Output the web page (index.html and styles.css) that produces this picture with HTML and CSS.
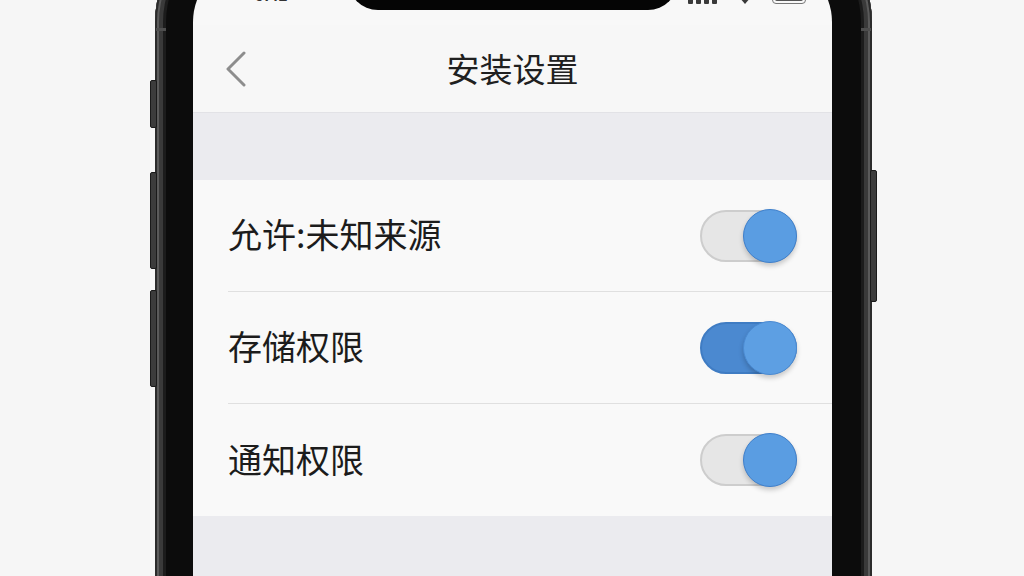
FILE: index.html
```html
<!DOCTYPE html>
<html lang="zh-CN">
<head>
    <meta charset="UTF-8">
    <meta name="viewport" content="width=device-width, initial-scale=1.0">
    <title>安装设置</title>
    <link rel="stylesheet" href="styles.css">
</head>
<body>

    <!-- 手机外框 -->
    <div class="phone">
        <span class="side-btn btn-mute"></span>
        <span class="side-btn btn-vol-up"></span>
        <span class="side-btn btn-vol-down"></span>
        <span class="side-btn btn-power"></span>
        <span class="band band-left"></span>
        <span class="band band-right"></span>

        <div class="screen">
            <div class="notch"></div>

            <!-- 状态栏 -->
            <div class="status-bar">
                <span class="time">9:41</span>
                <div class="status-icons">
                    <svg class="signal" width="30" height="14" viewBox="0 0 30 14">
                        <rect x="0" y="9" width="5" height="5" rx="1"/>
                        <rect x="8" y="6" width="5" height="8" rx="1"/>
                        <rect x="16" y="3" width="5" height="11" rx="1"/>
                        <rect x="24" y="0" width="5" height="14" rx="1"/>
                    </svg>
                    <svg class="wifi" width="14" height="10" viewBox="0 0 14 10">
                        <path d="M7 10 L1 3 A9 9 0 0 1 13 3 Z"/>
                    </svg>
                    <div class="battery"><span></span></div>
                </div>
            </div>

            <!-- 导航栏 -->
            <div class="nav-bar">
                <svg class="back" width="22" height="36" viewBox="0 0 22 36">
                    <path d="M19 2 L3 18 L19 34" />
                </svg>
                <h1>安装设置</h1>
                <span></span>
            </div>

            <div class="section-gap"></div>

            <!-- 设置列表 -->
            <ul class="settings-list">
                <li class="setting-row">
                    <span class="label">允许:未知来源</span>
                    <span class="toggle"><span class="knob"></span></span>
                </li>
                <li class="setting-row">
                    <span class="label">存储权限</span>
                    <span class="toggle on"><span class="knob"></span></span>
                </li>
                <li class="setting-row">
                    <span class="label">通知权限</span>
                    <span class="toggle"><span class="knob"></span></span>
                </li>
            </ul>

            <div class="section-gap bottom"></div>
        </div>
    </div>

</body>
</html>
```

FILE: styles.css
```css
body {
    font-family: "Noto Sans CJK SC", "Noto Sans", sans-serif;
    background-color: #f6f6f6;
    margin: 0;
    padding: 0;
    height: 576px;
    overflow: hidden;
    display: flex;
    justify-content: center;
    align-items: flex-start;
}

/* 手机外框 */
.phone {
    position: relative;
    width: 717px;
    height: 760px;
    margin-top: -78px;
    margin-left: 3px;
    box-sizing: border-box;
    padding: 38px 40px 38px 38px;
    background-color: #0c0c0c;
    border-radius: 100px;
    box-shadow:
        inset 0 0 0 2px #2b2b2b,
        inset 0 0 0 4px #5b5b5b,
        inset 0 0 0 8px #3a3a3a,
        inset 0 0 0 11px #1c1c1c;
}

.side-btn {
    position: absolute;
    width: 5px;
    background-color: #3c3c3c;
    border: 1px solid #1a1a1a;
    border-radius: 2px;
}

.btn-mute { left: -5px; top: 158px; height: 46px; }
.btn-vol-up { left: -5px; top: 250px; height: 95px; }
.btn-vol-down { left: -5px; top: 368px; height: 95px; }
.btn-power { right: -5px; top: 248px; height: 130px; }

.band {
    position: absolute;
    top: 106px;
    width: 10px;
    height: 3px;
    background-color: #4e4e4e;
}

.band-left { left: 1px; }
.band-right { right: 1px; }

/* 屏幕 */
.screen {
    position: relative;
    height: 100%;
    background-color: #f8f8f8;
    border-radius: 62px;
    overflow: hidden;
    display: flex;
    flex-direction: column;
}

.notch {
    position: absolute;
    top: 0;
    left: 50%;
    transform: translateX(-50%);
    width: 330px;
    height: 50px;
    background-color: #050505;
    border-radius: 0 0 30px 30px;
}

/* 状态栏 */
.status-bar {
    height: 65px;
    box-sizing: border-box;
    padding: 0 26px 21px 62px;
    display: flex;
    justify-content: space-between;
    align-items: flex-end;
    color: #333;
}

.time {
    font-family: "Liberation Sans", sans-serif;
    font-size: 16px;
    font-weight: bold;
    line-height: 1;
}

.status-icons {
    display: flex;
    align-items: flex-end;
    gap: 20px;
}

.signal, .wifi {
    fill: #3a3a3a;
}

.battery {
    width: 34px;
    height: 15px;
    box-sizing: border-box;
    border: 1.5px solid #777;
    border-radius: 4px;
    padding: 2px;
}

.battery span {
    display: block;
    height: 100%;
    background-color: #555;
    border-radius: 2px;
}

/* 导航栏 */
.nav-bar {
    height: 88px;
    display: grid;
    grid-template-columns: 1fr auto 1fr;
    align-items: center;
    padding: 0 32px;
    background-color: #f7f7f7;
    border-bottom: 1px solid #e2e2e6;
    box-sizing: border-box;
}

.back {
    fill: none;
    stroke: #8d8d8d;
    stroke-width: 3;
    stroke-linecap: round;
    stroke-linejoin: round;
}

.nav-bar h1 {
    margin: 0 0 2px 0;
    font-size: 33px;
    font-weight: 400;
    color: #202020;
    letter-spacing: 0;
}

/* 分组间隔 */
.section-gap {
    height: 67px;
    background-color: #ebebef;
}

.section-gap.bottom {
    flex: 1;
}

/* 设置列表 */
.settings-list {
    list-style: none;
    margin: 0;
    padding: 0 0 0 35px;
    background-color: #f9f9f9;
}

.setting-row {
    height: 112px;
    box-sizing: border-box;
    display: flex;
    align-items: center;
    justify-content: space-between;
    padding-right: 35px;
    border-bottom: 1px solid #e0e0e0;
}

.setting-row:last-child {
    border-bottom: none;
}

.label {
    font-size: 34px;
    color: #1c1c1c;
    margin-bottom: 4px;
}

/* 开关 */
.toggle {
    position: relative;
    width: 97px;
    height: 52px;
    box-sizing: border-box;
    border-radius: 26px;
    background-color: #e6e6e6;
    border: 2px solid #cdcdcd;
}

.toggle.on {
    background-color: #4b89d0;
    border-color: #3f7cc3;
}

.knob {
    position: absolute;
    right: -2px;
    top: -3px;
    width: 54px;
    height: 54px;
    box-sizing: border-box;
    border-radius: 50%;
    background-color: #5a9de2;
    border: 1.5px solid #3e7fcb;
    box-shadow: 0 3px 5px rgba(0, 0, 0, 0.2);
}

.toggle.on .knob {
    background-color: #5d9fe3;
    border-color: #4a8ad2;
}
```
